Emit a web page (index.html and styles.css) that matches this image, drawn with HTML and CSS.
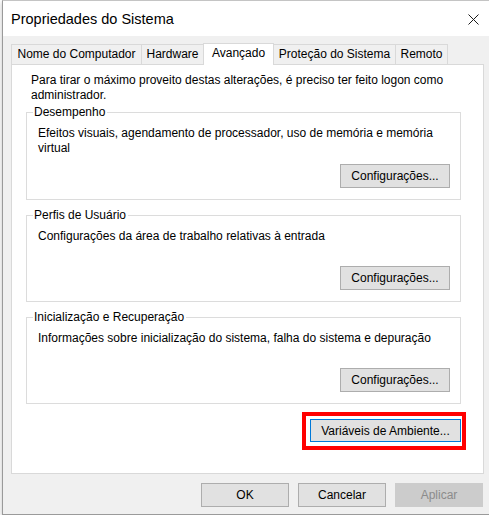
FILE: index.html
```html
<!DOCTYPE html>
<html lang="pt-BR">
<head>
<meta charset="utf-8">
<title>Propriedades do Sistema</title>
<link rel="stylesheet" href="styles.css">
</head>
<body>
<div class="window">
  <div class="titlebar">
    <span class="title">Propriedades do Sistema</span>
    <svg class="close" width="11" height="11" viewBox="0 0 11 11"><path d="M0.5 0.5 L10.5 10.5 M10.5 0.5 L0.5 10.5" stroke="#1a1a1a" stroke-width="1" fill="none"/></svg>
  </div>
  <div class="body">
    <div class="tabs">
      <div class="tab t1">Nome do Computador</div>
      <div class="tab t2">Hardware</div>
      <div class="tab t3 active">Avançado</div>
      <div class="tab t4">Proteção do Sistema</div>
      <div class="tab t5">Remoto</div>
    </div>
    <div class="panel">
      <p class="intro">Para tirar o máximo proveito destas alterações, é preciso ter feito logon como<br>administrador.</p>
      <div class="group g1">
        <div class="group-title">Desempenho</div>
        <div class="group-desc">Efeitos visuais, agendamento de processador, uso de memória e memória<br>virtual</div>
        <button class="btn">Configurações...</button>
      </div>
      <div class="group g2">
        <div class="group-title">Perfis de Usuário</div>
        <div class="group-desc">Configurações da área de trabalho relativas à entrada</div>
        <button class="btn">Configurações...</button>
      </div>
      <div class="group g3">
        <div class="group-title">Inicialização e Recuperação</div>
        <div class="group-desc">Informações sobre inicialização do sistema, falha do sistema e depuração</div>
        <button class="btn">Configurações...</button>
      </div>
      <div class="env-row">
        <div class="highlight"><button class="btn btn-default">Variáveis de Ambiente...</button></div>
      </div>
    </div>
    <div class="footer">
      <button class="btn fbtn">OK</button>
      <button class="btn fbtn">Cancelar</button>
      <button class="btn fbtn disabled">Aplicar</button>
    </div>
  </div>
</div>
</body>
</html>
```
FILE: styles.css
```css
* { box-sizing: border-box; }
html, body {
  margin: 0;
  padding: 0;
  background: #ffffff;
  overflow: hidden;
}
body {
  font-family: "Liberation Sans", Arial, sans-serif;
  font-size: 12px;
  color: #000;
}
.window {
  margin-left: 2px;
  width: 487px;
  height: 515px;
  background: #f0f0f0;
  border-left: 1px solid #9a9a9a;
  border-top: 1px solid #c4c4c4;
  border-bottom: 1px solid #9a9a9a;
  box-shadow: 0 2px 5px rgba(0,0,0,0.25);
  display: flex;
  flex-direction: column;
}
.titlebar {
  height: 35px;
  background: #fff;
  display: flex;
  align-items: center;
  justify-content: space-between;
  padding: 0 10px 0 8px;
}
.title {
  font-size: 14.5px;
  color: #000;
  line-height: 18px;
  margin-top: 1px;
}
.close { display: block; margin-top: 1px; }
.body {
  padding: 7px 5px 7px 8px;
  display: flex;
  flex-direction: column;
}
.tabs {
  display: flex;
  align-items: flex-end;
  height: 21px;
}
.tab {
  height: 20px;
  border: 1px solid #d9d9d9;
  border-bottom: none;
  background: #f0f0f0;
  text-align: center;
  line-height: 19px;
  white-space: nowrap;
  margin-left: -1px;
}
.t1 { width: 131px; margin-left: 0; }
.t2 { width: 63px; }
.t3 { width: 71px; }
.t4 { width: 123px; }
.t5 { width: 53px; }
.tab.active {
  height: 22px;
  background: #fff;
  margin-bottom: -1px;
  position: relative;
  z-index: 1;
  line-height: 19px;
}
.panel {
  width: 473px;
  height: 410px;
  background: #fff;
  border: 1px solid #d9d9d9;
  padding: 8px 17px 0 14px;
  display: flex;
  flex-direction: column;
}
.intro {
  margin: 0 0 0 5px;
  line-height: 15px;
}
.group {
  margin-top: 9px;
  margin-right: 5px;
  border: 1px solid #dcdcdc;
  padding: 0 10px 11px 11px;
  display: flex;
  flex-direction: column;
}
.g1 { height: 88px; }
.g2 { height: 87px; margin-top: 15px; }
.g3 { height: 87px; margin-top: 15px; }
.group-title {
  margin-top: -8px;
  margin-left: -5px;
  padding: 0 2px 0 1px;
  width: fit-content;
  background: #fff;
  line-height: 15px;
}
.group-desc {
  margin-top: 6px;
  line-height: 15px;
}
.btn {
  font-family: inherit;
  font-size: 12px;
  color: #000;
  background: #e1e1e1;
  border: 1px solid #adadad;
  border-radius: 0;
  height: 24px;
  padding: 0;
  margin: 0;
}
.group .btn {
  margin-top: auto;
  align-self: flex-end;
  width: 110px;
}
.env-row {
  display: flex;
  justify-content: flex-end;
  margin-top: 8px;
}
.highlight {
  border: 4px solid #ff0000;
  padding: 3px 1px 4px 4px;
}
.btn-default {
  width: 151px;
  height: 23px;
  border-color: #0078d7;
}
.footer {
  margin-top: 9px;
  display: flex;
  justify-content: flex-end;
  gap: 9px;
  padding-right: 1px;
}
.fbtn { width: 88px; }
.fbtn.disabled {
  background: #cccccc;
  border-color: #cccccc;
  color: #8b8b8b;
}
```
